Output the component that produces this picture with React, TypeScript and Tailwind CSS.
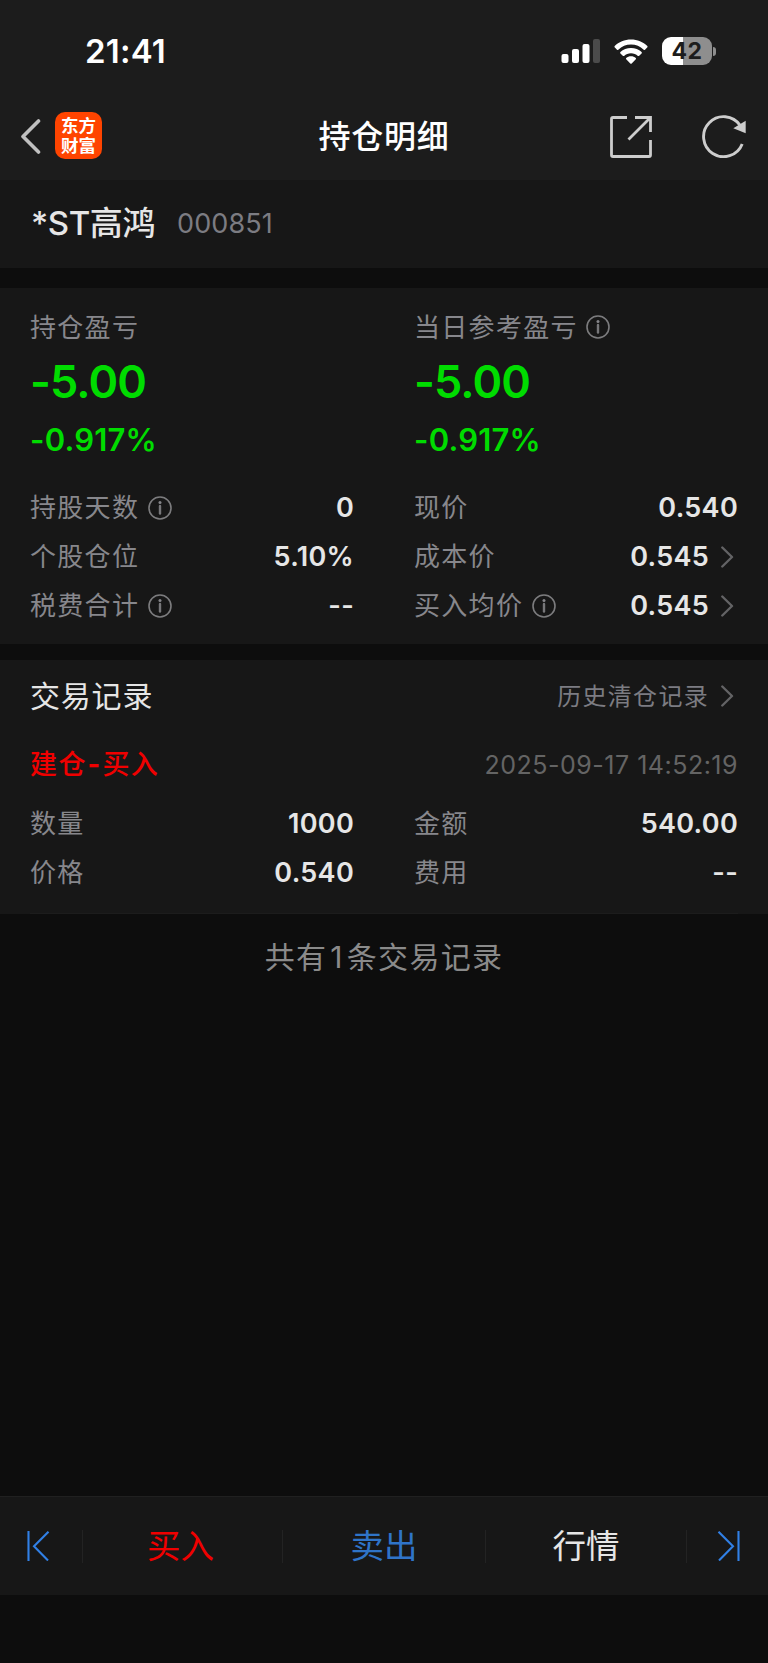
import * as React from 'react';

const InfoIcon: React.FC = () => (
  <svg className="ml-[8.500px] h-6 w-6 shrink-0" viewBox="0 0 24 24" fill="none">
    <circle cx="12" cy="12" r="11" stroke="#7c7c7e" strokeWidth="1.600" />
    <circle cx="12" cy="6.400" r="1.500" fill="#85858a" />
    <path d="M12 10V17.500" stroke="#77777a" strokeWidth="2.400" strokeLinecap="round" />
  </svg>
);

const ChevronIcon: React.FC = () => (
  <svg
    className="mr-1 ml-3 h-[22px] w-[13px] shrink-0"
    viewBox="0 0 13 22"
    fill="none"
    stroke="#636365"
    strokeWidth="2.400"
    strokeLinecap="round"
    strokeLinejoin="round"
  >
    <path d="M1.300 1.500L11 11L1.300 20.500" />
  </svg>
);

type RowProps = {
  label: string;
  value: string;
  info?: boolean;
  link?: boolean;
};

const Row: React.FC<RowProps> = ({ label, value, info, link }) => (
  <div className="flex h-[49px] items-center">
    <span className="text-[26px] tracking-[1.3px] text-[#87878c]">{label}</span>
    {info && <InfoIcon />}
    <span className="ml-auto pt-px text-[27px] font-semibold tracking-[0.3px] text-[#e6e6e6]">
      {value}
    </span>
    {link && <ChevronIcon />}
  </div>
);

type ProfitProps = {
  label: string;
  amount: string;
  percent: string;
  info?: boolean;
};

const Profit: React.FC<ProfitProps> = ({ label, amount, percent, info }) => (
  <div>
    <div className="flex h-10 items-center">
      <span className="text-[26px] tracking-[1.3px] text-[#87878c]">{label}</span>
      {info && <InfoIcon />}
    </div>
    <div className="flex h-[70px] items-center text-[45px] font-semibold tracking-[-0.9px] text-[#00dc00]">
      {amount}
    </div>
    <div className="flex h-[46px] items-center text-[31px] font-semibold tracking-[0.2px] text-[#00dc00]">
      {percent}
    </div>
  </div>
);

const StatusBar: React.FC = () => (
  <div className="flex h-[102px] items-center pl-[85px]">
    <span className="pt-0.5 text-[33px] font-semibold tracking-[0.2px] text-white">21:41</span>
    <svg className="ml-auto h-[25px] w-[39px]" viewBox="0 0 39 25">
      <rect x="0.5" y="15" width="7" height="9" rx="2" fill="#fff" />
      <rect x="11" y="10" width="7" height="14" rx="2" fill="#fff" />
      <rect x="21.500" y="5" width="7" height="19" rx="2" fill="#fff" />
      <rect x="32" y="0" width="7" height="24" rx="2" fill="#4b4b4b" />
    </svg>
    <svg className="ml-[14px] h-[25px] w-[34px]" viewBox="0 0 34 25" fill="#fff">
      <path d="M17 0.500C23.400 0.500 29.200 3 33.300 7C33.700 7.400 33.700 7.900 33.400 8.300L31 10.700C30.600 11.100 30.100 11.100 29.700 10.700C26.300 7.500 21.900 5.600 17 5.600C12.100 5.600 7.700 7.500 4.300 10.700C3.900 11.100 3.400 11.100 3 10.700L0.600 8.300C0.300 7.900 0.300 7.400 0.700 7C4.800 3 10.600 0.500 17 0.500Z" />
      <path d="M17 9C21.100 9 24.800 10.500 27.600 13.100C28 13.500 28 14 27.600 14.400L25.200 16.800C24.800 17.200 24.300 17.200 23.900 16.900C22.100 15.200 19.700 14.200 17 14.200C14.300 14.200 11.900 15.200 10.100 16.900C9.700 17.200 9.200 17.200 8.800 16.800L6.400 14.400C6 14 6 13.500 6.400 13.100C9.200 10.500 12.900 9 17 9Z" />
      <path d="M17 17.300C18.900 17.300 20.500 17.900 21.800 19C22.200 19.400 22.200 19.900 21.800 20.300L17.700 24.400C17.300 24.800 16.700 24.800 16.300 24.400L12.200 20.300C11.800 19.900 11.800 19.400 12.200 19C13.500 17.900 15.100 17.300 17 17.300Z" />
    </svg>
    <div className="mr-[52px] ml-[14px] flex items-center">
      <div className="flex h-7 w-[50px] items-center justify-center rounded-[9px] bg-linear-to-r from-white from-[42%] to-[#8e8e8e] to-[42%] text-[23px] font-bold tracking-[0.4px] text-[#1c1c1c]">
        42
      </div>
      <div className="ml-px h-[9px] w-[3px] rounded-r-full bg-[#8e8e8e]" />
    </div>
  </div>
);

const NavBar: React.FC = () => (
  <div className="grid h-[78px] grid-cols-[1fr_auto_1fr] items-start">
    <div className="flex items-center pt-2.5">
      <svg
        className="ml-5 h-[36px] w-[22px]"
        viewBox="0 0 22 36"
        fill="none"
        stroke="#c0c0c0"
        strokeWidth="3.600"
        strokeLinejoin="round"
        strokeLinecap="round"
      >
        <path d="M18.500 3L3 18.500L18.500 34" />
      </svg>
      <div className="ml-[13px] flex h-[47px] w-[47px] items-center justify-center rounded-[10px] bg-[#ff4400] text-[17.500px] leading-[19.500px] font-bold text-white">
        <span>
          东方
          <br />
          财富
        </span>
      </div>
    </div>
    <h1 className="pt-3 text-[32px] leading-[46px] font-medium tracking-[0.7px] text-white">
      持仓明细
    </h1>
    <div className="flex justify-end pt-[13px]">
      <svg
        className="h-[43px] w-[43px]"
        viewBox="0 0 43 43"
        fill="none"
        stroke="#cdcdcd"
        strokeWidth="2.800"
        strokeLinejoin="round"
      >
        <path d="M17 2.500H3Q1.500 2.500 1.500 4V40Q1.500 41.500 3 41.500H39Q40.500 41.500 40.500 40V25" />
        <path d="M25 2.500H40.500V17M40 3L18.500 24.500" strokeLinejoin="miter" />
      </svg>
      <svg className="mr-[22px] ml-[49px] h-[43px] w-[44px]" viewBox="0 0 44 43" fill="none">
        <path
          d="M40.200 29A20 20 0 1 1 38.100 10.400"
          stroke="#cdcdcd"
          strokeWidth="2.900"
        />
        <path d="M43.700 5.700V18.300L31.300 13.300Z" fill="#cdcdcd" />
      </svg>
    </div>
  </div>
);

const SkipIcon: React.FC<{ flip?: boolean }> = ({ flip }) => (
  <svg
    className={flip ? 'h-[30px] w-6 -scale-x-100' : 'h-[30px] w-6'}
    viewBox="0 0 24 30"
    fill="none"
    stroke="#3180e6"
    strokeWidth="2.100"
  >
    <path d="M1.500 0V30M21.500 0.700L7 15.200L21 29.500" />
  </svg>
);

const Divider: React.FC = () => <div className="h-[33px] w-px bg-[#232323]" />;

const App: React.FC = () => {
  return (
    <div className="flex h-[1663px] w-[768px] flex-col overflow-hidden bg-[#0d0d0d] font-['Inter','Noto_Sans_CJK_SC',sans-serif]">
      <header className="h-[180px] bg-[#1c1c1c]">
        <StatusBar />
        <NavBar />
      </header>

      <section className="flex h-[88px] items-center bg-[#171717] pl-[31px]">
        <span className="text-[33px] font-medium tracking-[-0.4px] text-[#e6e6e6]">*ST高鸿</span>
        <span className="ml-[22px] text-[27px] tracking-[0.1px] text-[#7c7c82]">000851</span>
      </section>

      <section className="mt-5 h-[356px] bg-[#171717] px-[30px] pt-[19px]">
        <div className="grid grid-cols-2 gap-x-[60px]">
          <Profit label="持仓盈亏" amount="-5.00" percent="-0.917%" />
          <Profit label="当日参考盈亏" amount="-5.00" percent="-0.917%" info />
        </div>
        <div className="mt-5 grid grid-cols-2 gap-x-[60px]">
          <Row label="持股天数" value="0" info />
          <Row label="现价" value="0.540" />
          <Row label="个股仓位" value="5.10%" />
          <Row label="成本价" value="0.545" link />
          <Row label="税费合计" value="--" info />
          <Row label="买入均价" value="0.545" info link />
        </div>
      </section>

      <section className="mt-4 h-[254px] bg-[#171717] px-[30px]">
        <div className="flex h-[72px] items-center">
          <h2 className="text-[30px] tracking-[0.8px] text-[#e6e6e6]">交易记录</h2>
          <span className="ml-auto pt-px text-[24px] tracking-[1.3px] text-[#7c7c82]">
            历史清仓记录
          </span>
          <ChevronIcon />
        </div>
        <div className="flex h-[64px] items-center justify-between pt-[3px]">
          <span className="text-[27px] font-medium tracking-[1.4px] text-[#f00000]">
            建仓<span className="mx-[0.800px] font-bold">-</span>买入
          </span>
          <span className="text-[25px] tracking-[0.5px] text-[#646464]">
            2025-09-17 14:52:19
          </span>
        </div>
        <div className="mt-[3px] grid grid-cols-2 gap-x-[60px]">
          <Row label="数量" value="1000" />
          <Row label="金额" value="540.00" />
          <Row label="价格" value="0.540" />
          <Row label="费用" value="--" />
        </div>
        <div className="mt-4 h-px bg-[#1c1c1c]" />
      </section>

      <p className="pt-5 text-center text-[30px] leading-[46px] tracking-[1.3px] text-[#8a8a8a]">
        共有<span className="mx-[3px]">1</span>条交易记录
      </p>

      <footer className="mt-auto mb-[68px] flex h-[99px] items-center border-t border-[#202020] bg-[#171717] text-[33.500px]">
        <div className="flex w-[82px] pl-[27px]">
          <SkipIcon />
        </div>
        <Divider />
        <div className="w-[199px] pt-px pr-1 text-center text-[#f00000]">买入</div>
        <Divider />
        <div className="w-[202px] pt-px text-center text-[#2f74c8]">卖出</div>
        <Divider />
        <div className="w-[200px] pt-px text-center text-[#e6e6e6]">行情</div>
        <Divider />
        <div className="flex w-[81px] justify-end pr-7">
          <SkipIcon flip />
        </div>
      </footer>
    </div>
  );
};

export default App;
